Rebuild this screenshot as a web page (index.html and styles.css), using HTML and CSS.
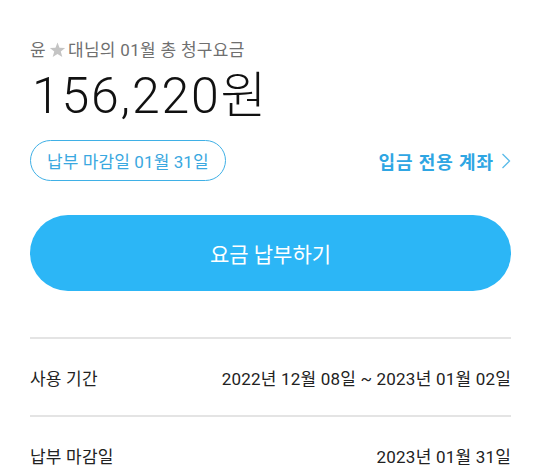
FILE: index.html
```html
<!DOCTYPE html>
<html lang="ko">
<head>
<meta charset="utf-8">
<link rel="stylesheet" href="styles.css">
</head>
<body>
<main class="page">
  <p class="title">윤<svg class="star" width="17" height="16" viewBox="0 0 24 23"><path d="M12 0.8 L14.9 8.3 L23 8.7 L16.7 13.8 L18.9 21.6 L12 17.2 L5.1 21.6 L7.3 13.8 L1 8.7 L9.1 8.3 Z" fill="currentColor"/></svg>대님의 01월 총 청구요금</p>
  <h1 class="amount">156,220원</h1>
  <div class="meta">
    <span class="pill">납부 마감일 01월 31일</span>
    <a class="account">입금 전용 계좌
      <svg class="chev" width="10" height="18" viewBox="0 0 10 18"><path d="M1.5 2 L8.5 9 L1.5 16" fill="none" stroke="currentColor" stroke-width="1.3"/></svg>
    </a>
  </div>
  <button class="pay">요금 납부하기</button>
  <ul class="rows">
    <li class="row"><span>사용 기간</span><span>2022년 12월 08일 ~ 2023년 01월 02일</span></li>
    <li class="row"><span>납부 마감일</span><span>2023년 01월 31일</span></li>
  </ul>
</main>
</body>
</html>
```
FILE: styles.css
```css
* { box-sizing: border-box; }
html, body { margin: 0; padding: 0; background: #fff; }
body { font-family: Roboto, "Noto Sans CJK KR", sans-serif; color: #222; }
.page { padding: 38px 29px 0 30px; }
.title { margin: 0; font-size: 17px; line-height: 24px; color: #6f6f6f; letter-spacing: 0.3px; display: flex; align-items: center; }
.star { color: #c4c4c4; margin: 0 2px 0 3px; }
.amount { margin: 4px 0 0 2px; font-size: 50px; font-weight: 300; line-height: 60px; color: #111; letter-spacing: 1.8px; }
.meta { display: flex; justify-content: space-between; align-items: center; margin-top: 14px; }
.pill { display: inline-flex; align-items: center; height: 41px; padding: 0 16px; border: 1.5px solid #3fb0e6; border-radius: 21px; color: #3aa8e0; font-size: 17px; letter-spacing: 0.1px; }
.account { display: inline-flex; align-items: center; gap: 7px; color: #2fa6e3; font-weight: 700; font-size: 18px; letter-spacing: 0.9px; }
.chev { color: #5bbbe9; }
.pay { display: block; width: 100%; height: 76px; margin-top: 34px; border: 0; border-radius: 38px; background: #2cb6f6; color: #fff; font-family: inherit; font-size: 21px; font-weight: 400; }
.rows { list-style: none; margin: 46px 0 0; padding: 0; }
.row { display: flex; justify-content: space-between; align-items: center; height: 78px; border-top: 2px solid #e4e4e4; font-size: 17px; color: #222; letter-spacing: 0.2px; }
```
